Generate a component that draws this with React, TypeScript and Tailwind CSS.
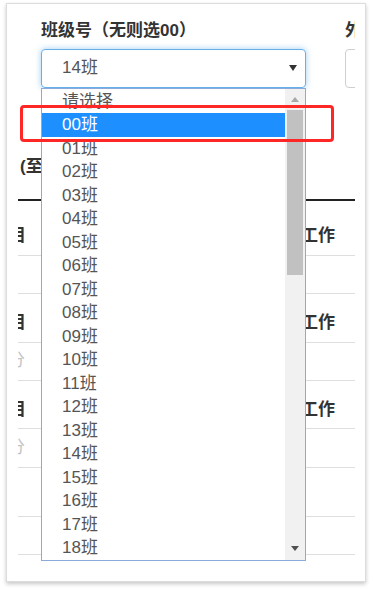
const FONT = "font-['Liberation_Sans','Noto_Sans_CJK_SC',sans-serif]";

const CLASSES = [
    "请选择", "00班", "01班", "02班", "03班", "04班", "05班", "06班", "07班", "08班", "09班",
    "10班", "11班", "12班", "13班", "14班", "15班", "16班", "17班", "18班", "19班",
];

function Line({ dark = false }: { dark?: boolean }) {
    return dark ? <div className="h-[2px] bg-[#222]" /> : <div className="h-px bg-[#dedede]" />;
}

export default function App() {
    return (
        <div className={`relative w-[373px] h-[589px] bg-white overflow-hidden pt-[3px] pl-[6px] ${FONT}`}>
            {/* 카드 */}
            <div className="w-[360px] h-[579px] bg-white border border-[#dcdcdc] shadow-[0_2px_4px_rgba(0,0,0,0.22)] pl-[11px]">
                <div className="w-[337px] h-full overflow-hidden">
                    {/* 필터 행 */}
                    <div className="flex pl-[23px] pt-[15px]">
                        <div className="w-[265px] shrink-0">
                            <div className="h-[24px] leading-[24px] text-[17px] font-bold text-[#333] whitespace-nowrap">
                                班级号（无则选00）
                            </div>
                            <div className="mt-[5.5px] h-[39px] rounded-[4px] border border-[#66afe9] shadow-[0_0_6px_rgba(102,175,233,0.6)] flex items-center justify-between pl-[20px] pr-[8px]">
                                <span className="text-[17px] text-[#555]">14班</span>
                                <svg width="8" height="6" viewBox="0 0 8 6">
                                    <path d="M0 0H8L4 6Z" fill="#333" />
                                </svg>
                            </div>
                        </div>
                        <div className="ml-[39px] w-[120px] shrink-0">
                            <div className="h-[24px] leading-[24px] text-[17px] font-bold text-[#333] whitespace-nowrap">
                                外出类型
                            </div>
                            <div className="mt-[5.5px] h-[39px] rounded-[4px] border border-[#cfcfcf]" />
                        </div>
                    </div>

                    {/* 제목 */}
                    <div className="mt-[67px] pl-[2px] h-[24px] leading-[24px] text-[17px] font-bold text-[#333]">(至</div>

                    <div className="mt-[20px]">
                        <Line dark />
                        <div className="h-[54px] pt-[25px] flex text-[17px] leading-[20px] font-bold text-[#333]">
                            <div className="w-[283px] shrink-0"><span className="ml-[-26px]">科目</span></div>
                            <span>工作</span>
                        </div>
                        <Line />
                        <div className="h-[37px]" />
                        <Line />
                        <div className="h-[48px] pt-[19px] flex text-[17px] leading-[20px] font-bold text-[#333]">
                            <div className="w-[283px] shrink-0"><span className="ml-[-26px]">科目</span></div>
                            <span>工作</span>
                        </div>
                        <Line />
                        <div className="h-[37px] pt-[8px] text-[17px] leading-[20px] text-[#c4c4c4]">
                            <span className="ml-[-10px]">分</span>
                        </div>
                        <Line />
                        <div className="h-[47px] pt-[19px] flex text-[17px] leading-[20px] font-bold text-[#333]">
                            <div className="w-[283px] shrink-0"><span className="ml-[-26px]">科目</span></div>
                            <span>工作</span>
                        </div>
                        <Line />
                        <div className="h-[38px] pt-[9px] text-[17px] leading-[20px] text-[#c4c4c4]">
                            <span className="ml-[-10px]">分</span>
                        </div>
                        <Line />
                        <div className="h-[48px]" />
                        <Line />
                        <div className="h-[37px]" />
                        <Line />
                    </div>
                </div>
            </div>

            {/* 펼쳐진 드롭다운 */}
            <div className="absolute left-[41px] top-[88px] w-[265px] h-[473px] bg-white border border-[#8ca9dc] flex overflow-hidden">
                <div className="flex-1 pt-[0.5px]">
                    {CLASSES.map((c) => (
                        <div
                            key={c}
                            className={`h-[23.5px] leading-[23.5px] pl-[20px] text-[17px] ${
                                c === "00班" ? "bg-[#1e8fff] text-white" : "text-[#555]"
                            }`}
                        >
                            {c}
                        </div>
                    ))}
                </div>
                {/* 스크롤바 */}
                <div className="w-[20px] shrink-0 bg-[#f1f1f1] flex flex-col items-center">
                    <div className="h-[21px] flex items-center justify-center">
                        <svg width="8" height="5" viewBox="0 0 8 5">
                            <path d="M0 5H8L4 0Z" fill="#a8a8a8" />
                        </svg>
                    </div>
                    <div className="w-[16px] h-[165px] bg-[#c1c1c1]" />
                    <div className="flex-1" />
                    <div className="h-[24px] flex items-center justify-center">
                        <svg width="8" height="5" viewBox="0 0 8 5">
                            <path d="M0 0H8L4 5Z" fill="#505050" />
                        </svg>
                    </div>
                </div>
            </div>

            {/* 빨간 강조 박스 */}
            <div className="absolute left-[20px] top-[105px] w-[314px] h-[37px] border-[3px] border-[#ff2626] rounded-[4px]" />
        </div>
    );
}
